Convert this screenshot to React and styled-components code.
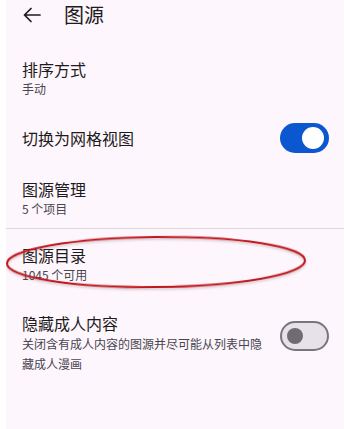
import React from "react";
import styled, { createGlobalStyle } from "styled-components";

const Global = createGlobalStyle`
  html, body { margin: 0; padding: 0; background: #ffffff; }
  body { font-family: "Noto Sans CJK SC", "Noto Sans", Roboto, sans-serif; }
`;

const Screen = styled.div`
  position: relative;
  margin: 0 6px;
  height: 429px;
  background: #fdf6fc;
  overflow: hidden;
`;

const TopBar = styled.div`
  display: flex;
  align-items: center;
  height: 30px;
  padding-left: 17px;
  gap: 23px;
`;

const BackButton = styled.div`
  display: flex;
  align-items: center;
  justify-content: center;
  width: 18px;
  height: 16px;
  color: #1d1b20;
`;

const Title = styled.h1`
  margin: 0;
  font-size: 20px;
  line-height: 28px;
  font-weight: 400;
  color: #1d1b20;
`;

const List = styled.div`
  display: flex;
  flex-direction: column;
  padding-top: 18px;
`;

const Row = styled.div`
  display: flex;
  align-items: ${(p) => (p.$top ? "flex-start" : "center")};
  gap: 12px;
  min-height: 40px;
  padding: ${(p) => p.$pt ?? 10}px 15px ${(p) => p.$pb ?? 10}px 16px;
`;

const TextCol = styled.div`
  flex: 1;
  display: flex;
  flex-direction: column;
  min-width: 0;
`;

const ItemTitle = styled.div`
  font-size: 16px;
  line-height: 22px;
  color: #1d1b20;
`;

const ItemSub = styled.div`
  font-size: 12px;
  line-height: ${(p) => (p.$multi ? 20 : 18)}px;
  color: #49454f;
`;

const Divider = styled.div`
  height: 1px;
  background: #dcd6dd;
`;

const Track = styled.div`
  flex: none;
  position: relative;
  box-sizing: border-box;
  width: 49px;
  height: 30px;
  border-radius: 15px;
  margin-top: ${(p) => p.$mt ?? 0}px;
  background: ${(p) => (p.$on ? "#0b57d0" : "#e7e1e8")};
  border: ${(p) => (p.$on ? "none" : "2px solid #79747e")};
  display: flex;
  align-items: center;
  justify-content: ${(p) => (p.$on ? "flex-end" : "flex-start")};
  padding: ${(p) => (p.$on ? "0 5px" : "0 5px")};
`;

const Knob = styled.div`
  border-radius: 50%;
  width: ${(p) => (p.$on ? 22 : 16)}px;
  height: ${(p) => (p.$on ? 22 : 16)}px;
  background: ${(p) => (p.$on ? "#ffffff" : "#6f6b74")};
`;

const Annotation = styled.svg`
  position: absolute;
  left: 0;
  top: 0;
  pointer-events: none;
`;

function Switch({ on, mt }) {
  return (
    <Track $on={on} $mt={mt}>
      <Knob $on={on} />
    </Track>
  );
}

export default function App() {
  return (
    <>
      <Global />
      <Screen>
        <TopBar>
          <BackButton>
            <svg width="18" height="16" viewBox="0 0 18 16" fill="none">
              <path
                d="M17 8H1.5M8 1.5L1.5 8L8 14.5"
                stroke="#1d1b20"
                strokeWidth="1.7"
                strokeLinecap="round"
                strokeLinejoin="round"
              />
            </svg>
          </BackButton>
          <Title>图源</Title>
        </TopBar>
        <List>
          <Row>
            <TextCol>
              <ItemTitle>排序方式</ItemTitle>
              <ItemSub>手动</ItemSub>
            </TextCol>
          </Row>
          <Row>
            <TextCol>
              <ItemTitle>切换为网格视图</ItemTitle>
            </TextCol>
            <Switch on />
          </Row>
          <Row>
            <TextCol>
              <ItemTitle>图源管理</ItemTitle>
              <ItemSub>5 个项目</ItemSub>
            </TextCol>
          </Row>
          <Divider />
          <Row $pt={15} $pb={14}>
            <TextCol>
              <ItemTitle>图源目录</ItemTitle>
              <ItemSub>1045 个可用</ItemSub>
            </TextCol>
          </Row>
          <Row $top $pt={14}>
            <TextCol>
              <ItemTitle>隐藏成人内容</ItemTitle>
              <ItemSub $multi>关闭含有成人内容的图源并尽可能从列表中隐藏成人漫画</ItemSub>
            </TextCol>
            <Switch mt={9} />
          </Row>
        </List>
        <Annotation width="338" height="429" viewBox="6 0 338 429">
          <defs>
            <filter id="sh" x="-10%" y="-30%" width="120%" height="160%">
              <feDropShadow dx="0" dy="1.5" stdDeviation="1.2" floodColor="#6b5a60" floodOpacity="0.35" />
            </filter>
          </defs>
          <ellipse
            cx="156"
            cy="262"
            rx="149"
            ry="25"
            fill="none"
            stroke="#c1161d"
            strokeWidth="2"
            transform="rotate(-0.6 156 262)"
            filter="url(#sh)"
          />
        </Annotation>
      </Screen>
    </>
  );
}
